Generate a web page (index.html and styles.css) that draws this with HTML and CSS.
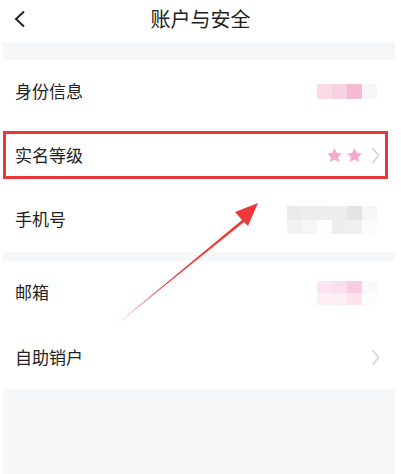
FILE: index.html
```html
<!DOCTYPE html>
<html lang="zh">
<head>
<meta charset="utf-8">
<link rel="stylesheet" href="styles.css">
</head>
<body>
<div class="page">
  <header class="topbar">
    <svg class="back" width="14" height="18" viewBox="0 0 14 18"><path d="M11 1.5 L3 9 L11 16.5" fill="none" stroke="#222" stroke-width="2"/></svg>
    <div class="title">账户与安全</div>
  </header>
  <div class="band band-top"></div>
  <div class="row r1">
    <span class="label">身份信息</span>
    <div class="mosaic m1">
      <i style="background:#fcdbe8"></i><i style="background:#f9d2e2"></i><i style="background:#f6bad5"></i><i style="background:#f8f5f6"></i>
    </div>
  </div>
  <div class="row boxed">
    <span class="label">实名等级</span>
    <div class="right">
      <svg class="star" width="17" height="17" viewBox="0 0 24 24"><path d="M12 1.5l3.2 6.9 7.3.8-5.4 5 1.5 7.3L12 17.8l-6.6 3.7 1.5-7.3-5.4-5 7.3-.8z" fill="#f6a9c9"/></svg>
      <svg class="star" width="17" height="17" viewBox="0 0 24 24"><path d="M12 1.5l3.2 6.9 7.3.8-5.4 5 1.5 7.3L12 17.8l-6.6 3.7 1.5-7.3-5.4-5 7.3-.8z" fill="#f6a9c9"/></svg>
      <svg class="chev" width="9" height="17" viewBox="0 0 9 17"><path d="M1.5 1 L7.5 8.5 L1.5 16" fill="none" stroke="#cfcfcf" stroke-width="1.3"/></svg>
    </div>
  </div>
  <div class="row r3">
    <span class="label">手机号</span>
    <div class="mosaic m3">
      <i style="background:#e9eaea"></i><i style="background:#ededed"></i><i style="background:#ededed"></i><i style="background:#eeeeee"></i><i style="background:#e3e5e5"></i><i style="background:#f6f6f6"></i>
      <i style="background:#f2f2f2"></i><i style="background:#f6f6f6"></i><i style="background:#fefefe"></i><i style="background:#eeeeee"></i><i style="background:#efefef"></i><i style="background:#fbfbfb"></i>
    </div>
  </div>
  <div class="band band-mid"></div>
  <div class="row r4">
    <span class="label">邮箱</span>
    <div class="mosaic m4">
      <i style="background:#fce5ee"></i><i style="background:#fbe0eb"></i><i style="background:#f8cde0"></i><i style="background:#fbf8f9"></i>
      <i style="background:#fdeef4"></i><i style="background:#fdeef3"></i><i style="background:#fbe3ec"></i><i style="background:#fdfcfc"></i>
    </div>
  </div>
  <div class="row">
    <span class="label">自助销户</span>
    <svg class="chev" width="9" height="17" viewBox="0 0 9 17"><path d="M1.5 1 L7.5 8.5 L1.5 16" fill="none" stroke="#cfcfcf" stroke-width="1.3"/></svg>
  </div>
  <div class="band band-bottom"></div>
  <svg class="arrow" width="401" height="474" viewBox="0 0 401 474">
    <path d="M117 324 L242 220 L235 212 L258 203 L248 226 L244 222 Z" fill="#f0393a"/>
  </svg>
</div>
</body>
</html>
```
FILE: styles.css
```css
html, body {
  margin: 0;
  padding: 0;
  background: #ffffff;
}
body {
  font-family: "Noto Sans CJK SC", "Noto Sans", sans-serif;
  color: #222222;
}
.page {
  position: relative;
  width: 401px;
  height: 474px;
  overflow: hidden;
}
.topbar {
  height: 42px;
  display: flex;
  align-items: center;
  justify-content: center;
  position: relative;
}
.back {
  position: absolute;
  left: 13px;
  top: 10px;
}
.title {
  font-size: 20px;
  line-height: 24px;
  margin-top: -5px;
  color: #222;
}
.band {
  margin: 0 6px 0 3px;
  background: #f6f7f9;
}
.band-top { height: 18px; }
.band-mid { height: 9px; }
.band-bottom { height: 85px; }
.row {
  height: 64px;
  margin: 0 6px 0 3px;
  display: flex;
  align-items: center;
  justify-content: space-between;
  padding: 0 15px 0 12px;
  box-sizing: border-box;
  background: #fff;
}
.r1 .label, .r3 .label, .r4 .label { margin-top: -3px; }
.label {
  font-size: 17px;
  line-height: 20px;
}
.boxed {
  border: 3px solid #e7383e;
  height: 48px;
  margin: 7px 13px 9px 3px;
  padding: 0 5px 0 9px;
}
.right {
  display: flex;
  align-items: center;
  gap: 3px;
}
.chev { display: block; }
.right .chev { margin-left: 5px; }
.mosaic {
  display: grid;
  grid-template-columns: repeat(4, 15px);
  grid-auto-rows: 15px;
  margin-right: 3px;
}
.mosaic i { display: block; }
.m1 { margin-top: -2px; }
.m3 {
  grid-template-columns: repeat(6, 15px);
  grid-auto-rows: 14px;
  margin-right: 3px;
}
.m4 {
  grid-template-columns: repeat(4, 15px);
  grid-auto-rows: 12px;
  margin-top: 0;
}
.arrow {
  position: absolute;
  left: 0;
  top: 0;
  pointer-events: none;
}
```
